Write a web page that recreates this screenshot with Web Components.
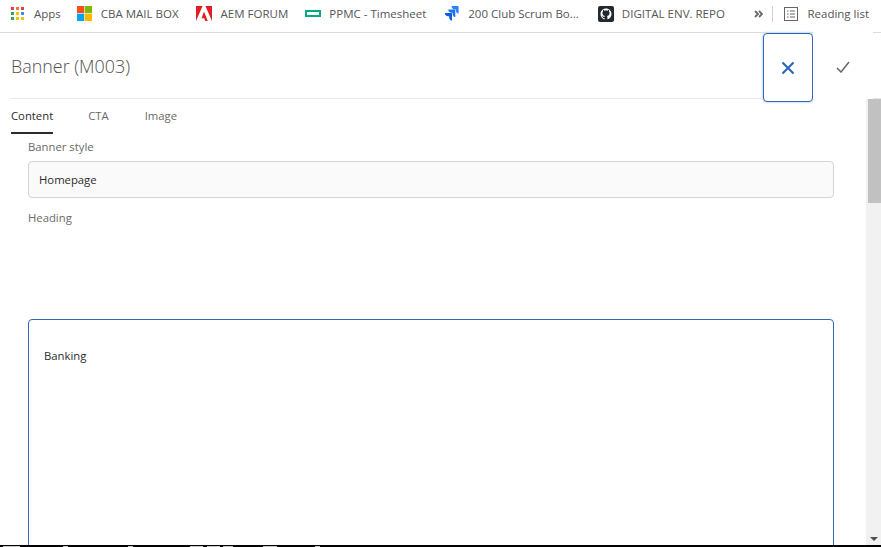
<!DOCTYPE html>
<html>
<head>
<meta charset="utf-8">
<title>Banner dialog</title>
<style>
  html, body { margin: 0; height: 547px; overflow: hidden; background: #fff; }
  body { display: flex; flex-direction: column; font-family: "Open Sans", "Noto Sans", sans-serif; }
</style>
</head>
<body>
  <bookmark-bar>
    <book-mark label="Apps" style="--g:10px">
      <svg slot="icon" width="13" height="13" viewBox="0 0 13 13">
        <rect x="0" y="0" width="3" height="3" fill="#d9453a"/><rect x="5" y="0" width="3" height="3" fill="#e8793c"/><rect x="10" y="0" width="3" height="3" fill="#d9453a"/>
        <rect x="0" y="5" width="3" height="3" fill="#3aa757"/><rect x="5" y="5" width="3" height="3" fill="#f4c20d"/><rect x="10" y="5" width="3" height="3" fill="#4a86e8"/>
        <rect x="0" y="10" width="3" height="3" fill="#3aa757"/><rect x="5" y="10" width="3" height="3" fill="#f4c20d"/><rect x="10" y="10" width="3" height="3" fill="#f4c20d"/>
      </svg>
    </book-mark>
    <book-mark label="CBA MAIL BOX" style="margin-right:17px">
      <svg slot="icon" width="15" height="15" viewBox="0 0 15 15">
        <rect width="7.2" height="7.2" fill="#f25022"/><rect x="7.8" width="7.2" height="7.2" fill="#7fba00"/>
        <rect y="7.8" width="7.2" height="7.2" fill="#00a4ef"/><rect x="7.8" y="7.8" width="7.2" height="7.2" fill="#ffb900"/>
      </svg>
    </book-mark>
    <book-mark label="AEM FORUM" style="margin-right:17px">
      <svg slot="icon" width="16" height="15" viewBox="0 0 16 15">
        <path d="M0 0H6.6L0 15Z M9.4 0H16V15Z M8 5.4L11.8 15H9.3L8.2 12.2H5.5Z" fill="#e01f25"/>
      </svg>
    </book-mark>
    <book-mark label="PPMC - Timesheet" style="--g:8px;margin-right:17px">
      <svg slot="icon" width="16" height="7" viewBox="0 0 16 7">
        <rect x="1" y="1" width="14" height="5" fill="none" stroke="#01a982" stroke-width="2"/>
      </svg>
    </book-mark>
    <book-mark label="200 Club Scrum Bo..." style="margin-right:19px">
      <svg slot="icon" width="16" height="15" viewBox="0 0 16 15">
        <path d="M15 0H8.5C8.5 2 10 3.4 11.8 3.4H12.9V4.5C12.9 6.2 14.2 7.5 15.6 7.6V.6C15.6 .3 15.3 0 15 0Z" fill="#2684ff"/>
        <path d="M11.6 3.5H5.2C5.2 5.4 6.7 6.8 8.5 6.8H9.6V7.9C9.6 9.7 11 11 12.3 11.1V4.1C12.3 3.8 12 3.5 11.6 3.5Z" fill="#1f74ea"/>
        <path d="M8.3 7H1.8C1.8 8.9 3.3 10.3 5.1 10.3H6.2V11.4C6.2 13.2 7.6 14.6 9 14.6V7.6C9 7.3 8.7 7 8.3 7Z" fill="#0c5fd6"/>
      </svg>
    </book-mark>
    <book-mark label="DIGITAL ENV. REPO" style="--g:8px">
      <svg slot="icon" width="16" height="16" viewBox="0 0 16 16">
        <rect width="16" height="16" rx="2" fill="#24292e"/>
        <path d="M8 2.6C4.9 2.6 2.5 5 2.5 8.1C2.5 10.5 4 12.5 6.2 13.3C6.5 13.3 6.6 13.2 6.6 13V11.9C5.1 12.2 4.7 11.3 4.6 10.9C4.5 10.7 4.2 10.2 4 10.1C3.8 10 3.5 9.7 4 9.7C4.4 9.7 4.8 10.1 4.9 10.3C5.4 11.2 6.2 10.9 6.6 10.7C6.6 10.3 6.8 10.1 7 9.9C5.7 9.8 4.4 9.3 4.4 7.1C4.4 6.5 4.6 6 5 5.6C4.9 5.4 4.8 4.8 5 4.1C5 4.1 5.5 3.9 6.6 4.7C7.1 4.6 7.5 4.5 8 4.5C8.5 4.5 8.9 4.6 9.4 4.7C10.5 3.9 11 4.1 11 4.1C11.2 4.8 11.1 5.4 11 5.6C11.4 6 11.6 6.5 11.6 7.1C11.6 9.3 10.3 9.8 9 9.9C9.2 10.1 9.4 10.5 9.4 11V13C9.4 13.2 9.5 13.3 9.8 13.3C12 12.5 13.5 10.5 13.5 8.1C13.5 5 11.1 2.6 8 2.6Z" fill="#fff"/>
      </svg>
    </book-mark>
    <bar-end></bar-end>
  </bookmark-bar>

  <dialog-head heading="Banner (M003)"></dialog-head>

  <dialog-body>
    <tab-row></tab-row>
    <form-field label="Banner style" value="Homepage"></form-field>
    <rich-field label="Heading" value="Banking"></rich-field>
  </dialog-body>

  <task-strip></task-strip>

<script>
  class BookmarkBar extends HTMLElement {
    constructor() {
      super()
      this.attachShadow({ mode: 'open' })
      this.shadowRoot.innerHTML = `
        <style>
          :host { display: flex; align-items: center; height: 27px; flex: none; padding: 0 0 5px 11px; border-bottom: 1px solid #dcdcdc; background: #fff; }
        </style>
        <slot></slot>`
    }
  }

  class BookMark extends HTMLElement {
    constructor() {
      super()
      this.attachShadow({ mode: 'open' })
      this.shadowRoot.innerHTML = `
        <style>
          :host { display: flex; align-items: center; margin-right: 16px; font: 11.5px "Open Sans", "Noto Sans", sans-serif; color: #555; white-space: nowrap; }
          .icon { display: flex; align-items: center; justify-content: center; margin-right: var(--g, 9px); }
        </style>
        <span class="icon"><slot name="icon"></slot></span><span class="text"></span>`
      this.shadowRoot.querySelector('.text').textContent = this.getAttribute('label')
    }
  }

  class BarEnd extends HTMLElement {
    constructor() {
      super()
      this.attachShadow({ mode: 'open' })
      this.shadowRoot.innerHTML = `
        <style>
          :host { display: flex; align-items: center; margin-left: auto; padding-right: 12px; font: 11.5px "Open Sans", "Noto Sans", sans-serif; color: #555; white-space: nowrap; }
          .sep { width: 1px; height: 16px; background: #d0d0d0; margin: 0 11px 0 9px; }
          svg { display: block; }
          .list { margin-right: 9px; }
        </style>
        <svg width="9" height="8" viewBox="0 0 9 8" fill="none" stroke="#6a6a6a" stroke-width="1.8"><path d="M1 1L4 4L1 7M5 1L8 4L5 7"/></svg>
        <span class="sep"></span>
        <svg class="list" width="14" height="14" viewBox="0 0 14 14" fill="none" stroke="#666"><rect x=".5" y=".5" width="13" height="13"/><path d="M3 4H4.5M6 4H11M3 7H4.5M6 7H11M3 10H4.5M6 10H11"/></svg>
        <span>Reading list</span>`
    }
  }

  class DialogHead extends HTMLElement {
    constructor() {
      super()
      this.attachShadow({ mode: 'open' })
      this.shadowRoot.innerHTML = `
        <style>
          :host { display: flex; align-items: center; height: 65px; flex: none; margin-left: 11px; border-bottom: 1px solid #e6e6e6; }
          h1 { margin: 0; font: 300 17.9px "Open Sans", "Noto Sans", sans-serif; color: #505050; flex: 1; }
          button { width: 50px; height: 69px; background: #fff; border: 0; padding: 0; display: flex; align-items: center; justify-content: center; }
          .cancel { border: 1px solid #2f68b8; border-radius: 4px; box-shadow: 0 0 2px 1px #cfe0f6; margin-top: 3px; width: 50px; padding-top: 1px; }
          .ok { width: 60px; margin-right: 8px; padding-top: 3px; }
        </style>
        <h1></h1>
        <button class="cancel"><svg width="14" height="14" viewBox="0 0 14 14" stroke="#2f68b8" stroke-width="2.2" fill="none"><path d="M1.5 1.5L12.5 12.5M12.5 1.5L1.5 12.5"/></svg></button>
        <button class="ok"><svg width="14" height="12" viewBox="0 0 14 12" stroke="#666" stroke-width="1.5" fill="none"><path d="M1 7L5 11L13 1"/></svg></button>`
      this.shadowRoot.querySelector('h1').textContent = this.getAttribute('heading')
    }
  }

  class DialogBody extends HTMLElement {
    constructor() {
      super()
      this.attachShadow({ mode: 'open' })
      this.shadowRoot.innerHTML = `
        <style>
          :host { display: flex; flex: 1; min-height: 0; overflow: hidden; }
          .pane { flex: 1; min-width: 0; overflow: hidden; padding-left: 11px; }
          .bar { width: 15px; flex: none; background: #f1f1f1; display: flex; flex-direction: column; justify-content: space-between; }
          .thumb { height: 104px; margin-left: 2px; background: #c1c1c1; }
          .arrow { width: 0; height: 0; margin: 0 auto 4px; border: 4px solid transparent; border-top-color: #505050; border-bottom: 0; }
        </style>
        <div class="pane"><slot></slot></div>
        <div class="bar"><div class="thumb"></div><div class="arrow"></div></div>`
    }
  }

  class TabRow extends HTMLElement {
    constructor() {
      super()
      this.attachShadow({ mode: 'open' })
      this.shadowRoot.innerHTML = `
        <style>
          :host { display: flex; gap: 35px; height: 35px; font: 11.3px "Open Sans", "Noto Sans", sans-serif; color: #6a6a6a; }
          span { display: flex; align-items: center; height: 33px; }
          .on { color: #2c2c2c; border-bottom: 2px solid #2c2c2c; }
          span:last-child { margin-left: 1px; }
        </style>
        <span class="on">Content</span><span>CTA</span><span>Image</span>`
    }
  }

  class FormField extends HTMLElement {
    constructor() {
      super()
      this.attachShadow({ mode: 'open' })
      this.shadowRoot.innerHTML = `
        <style>
          :host { display: block; margin: 5px 32px 0 17px; font: 11.3px "Open Sans", "Noto Sans", sans-serif; color: #6a6a6a; }
          label { display: block; height: 22px; line-height: 16px; }
          div { height: 35px; border: 1px solid #d4d4d4; border-radius: 4px; background: #fafafa; color: #2c2c2c; display: flex; align-items: center; padding-left: 10px; }
        </style>
        <label></label><div></div>`
      this.shadowRoot.querySelector('label').textContent = this.getAttribute('label')
      this.shadowRoot.querySelector('div').textContent = this.getAttribute('value')
    }
  }

  class RichField extends HTMLElement {
    constructor() {
      super()
      this.attachShadow({ mode: 'open' })
      this.shadowRoot.innerHTML = `
        <style>
          :host { display: block; margin: 12px 32px 0 17px; font: 11.3px "Open Sans", "Noto Sans", sans-serif; color: #6a6a6a; }
          label { display: block; height: 109px; line-height: 16px; }
          div { height: 400px; border: 1px solid #2f68b8; border-radius: 4px; color: #2c2c2c; padding: 28px 15px; }
        </style>
        <label></label><div></div>`
      this.shadowRoot.querySelector('label').textContent = this.getAttribute('label')
      this.shadowRoot.querySelector('div').textContent = this.getAttribute('value')
    }
  }

  // bottom strip: the reference only shows the unreadable tops of some light marks
  class TaskStrip extends HTMLElement {
    constructor() {
      super()
      this.attachShadow({ mode: 'open' })
      this.shadowRoot.innerHTML = `
        <style>
          :host { display: flex; align-items: flex-end; height: 2px; flex: none; overflow: hidden; background: #000; }
          div { width: 340px; height: 1px; background: linear-gradient(90deg,
            #000 3px, #ccc 3px 20px, #000 20px 63px, #ccc 63px 68px, #000 68px 128px, #ccc 128px 133px,
            #000 133px 190px, #ccc 190px 203px, #000 203px 207px, #ccc 207px 220px, #000 220px 223px, #ccc 223px 233px,
            #000 233px 263px, #ccc 263px 277px, #000 277px 315px, #ccc 315px 320px, #000 320px); }
        </style>
        <div></div>`
    }
  }

  customElements.define('bookmark-bar', BookmarkBar)
  customElements.define('book-mark', BookMark)
  customElements.define('bar-end', BarEnd)
  customElements.define('dialog-head', DialogHead)
  customElements.define('dialog-body', DialogBody)
  customElements.define('tab-row', TabRow)
  customElements.define('form-field', FormField)
  customElements.define('rich-field', RichField)
  customElements.define('task-strip', TaskStrip)
</script>
</body>
</html>
